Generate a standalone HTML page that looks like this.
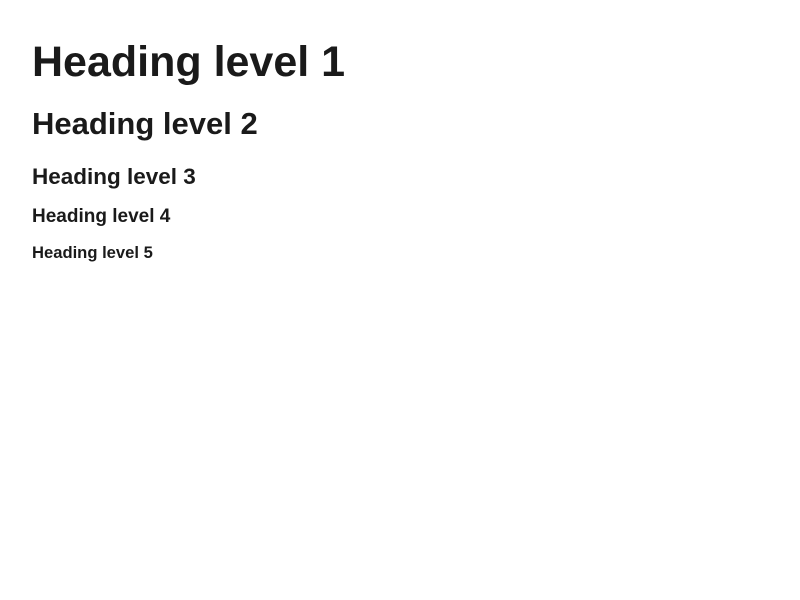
<!DOCTYPE html>
<html><head><meta charset="utf-8"><style>
html,body{margin:0;padding:0;background:#fff;width:800px;height:600px;overflow:hidden}
div{position:absolute;left:32px;font-family:"Liberation Sans",sans-serif;font-weight:bold;color:#1a1a1a;line-height:1;white-space:nowrap}
</style></head><body>
<div style="top:40.6px;font-size:43px">Heading level 1</div>
<div style="top:107.8px;font-size:31px">Heading level 2</div>
<div style="top:166px;font-size:22.5px">Heading level 3</div>
<div style="top:207px;font-size:19px">Heading level 4</div>
<div style="top:245px;font-size:16.6px">Heading level 5</div>
</body></html>
